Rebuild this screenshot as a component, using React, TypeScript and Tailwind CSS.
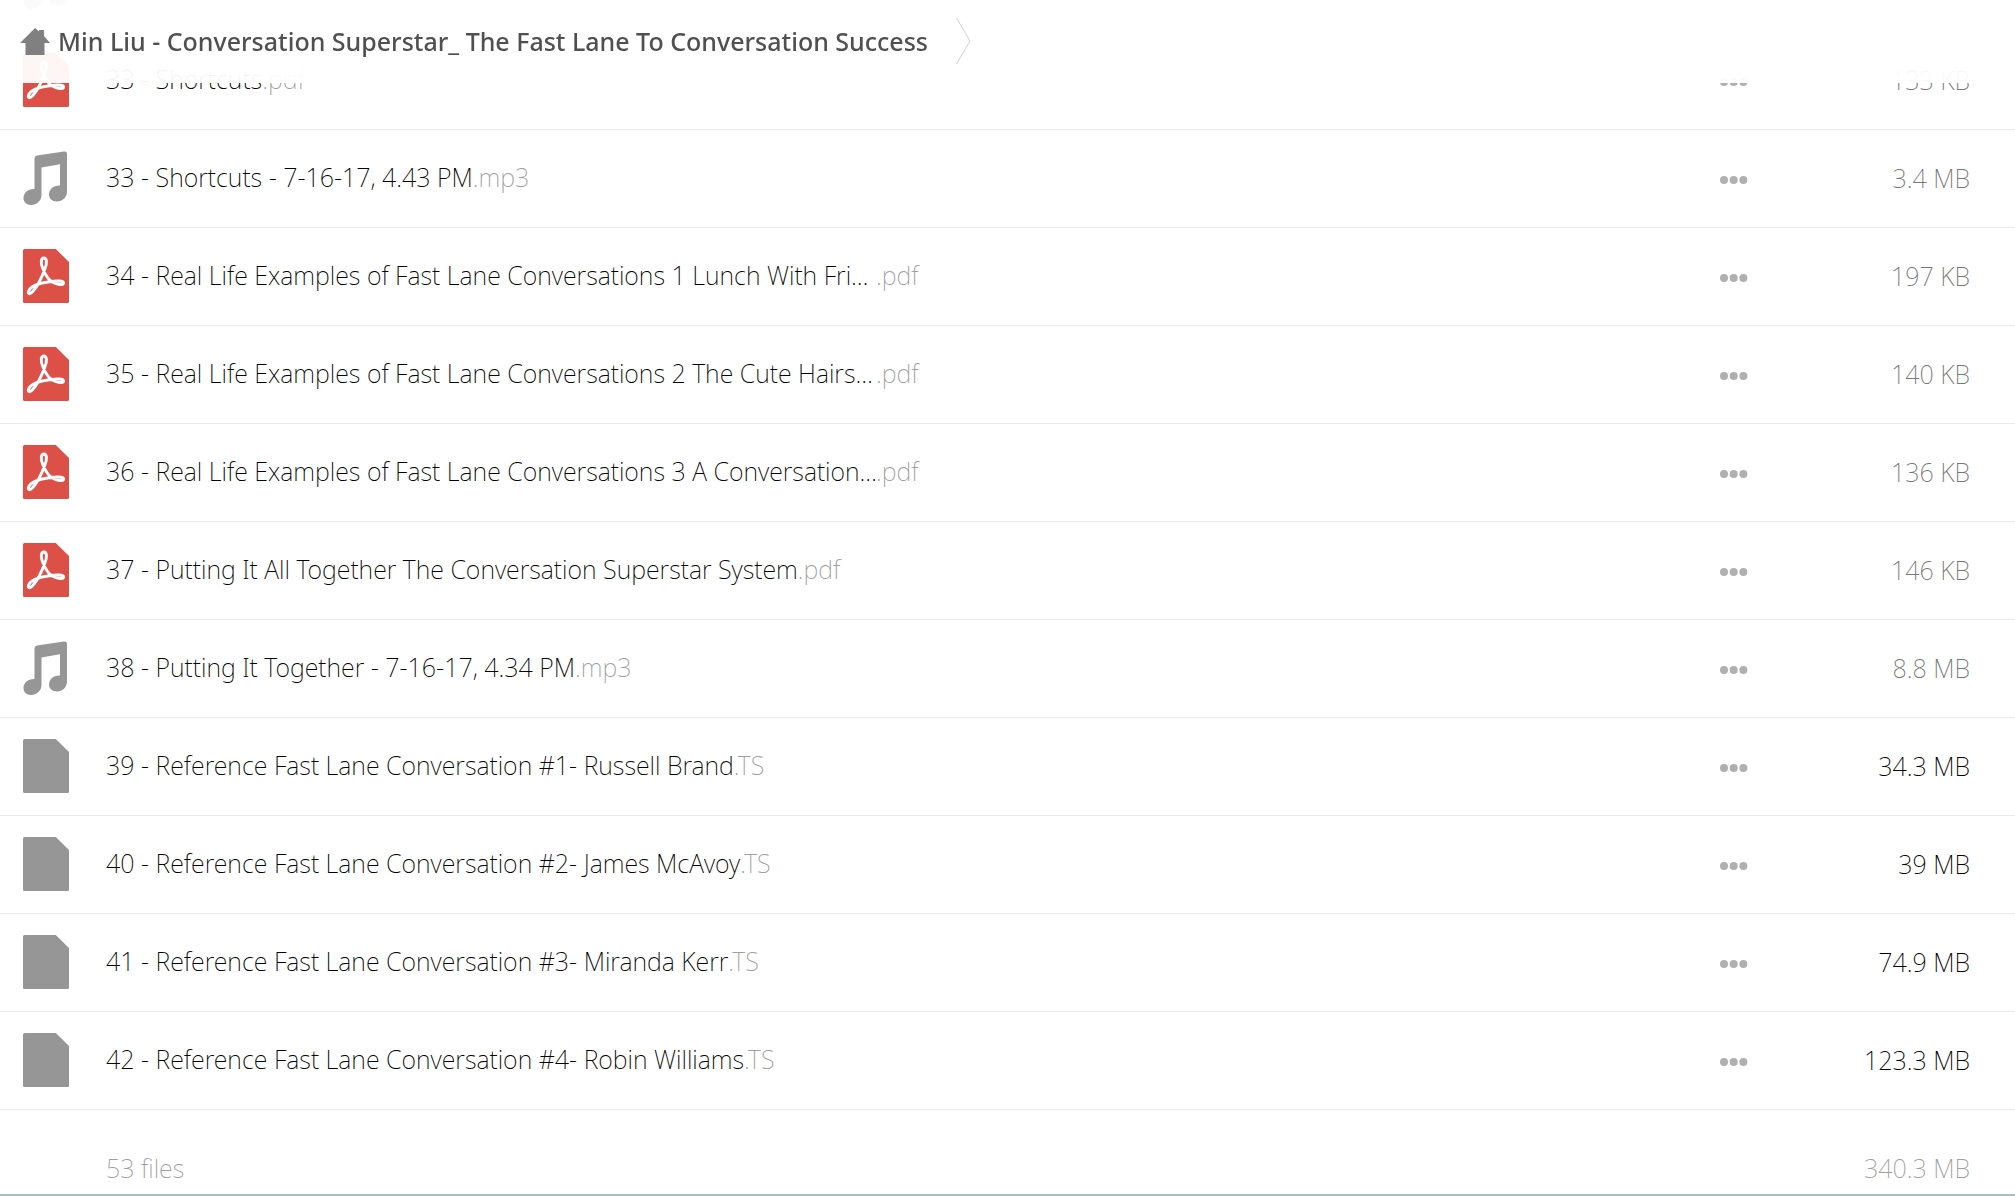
type FileKind = 'pdf' | 'audio' | 'file'

type FileRow = {
  name: string
  ext: string
  size: string
  kind: FileKind
  cut?: boolean
  large?: boolean
}

const FILES: FileRow[] = [
  { name: '', ext: '', size: '', kind: 'audio' },
  { name: '33 - Shortcuts', ext: '.pdf', size: '133 KB', kind: 'pdf' },
  { name: '33 - Shortcuts - 7-16-17, 4.43 PM', ext: '.mp3', size: '3.4 MB', kind: 'audio' },
  { name: '34 - Real Life Examples of Fast Lane Conversations 1 Lunch With Fri…', ext: '.pdf', size: '197 KB', kind: 'pdf', cut: true },
  { name: '35 - Real Life Examples of Fast Lane Conversations 2 The Cute Hairs…', ext: '.pdf', size: '140 KB', kind: 'pdf', cut: true },
  { name: '36 - Real Life Examples of Fast Lane Conversations 3 A Conversation…', ext: '.pdf', size: '136 KB', kind: 'pdf', cut: true },
  { name: '37 - Putting It All Together The Conversation Superstar System', ext: '.pdf', size: '146 KB', kind: 'pdf' },
  { name: '38 - Putting It Together - 7-16-17, 4.34 PM', ext: '.mp3', size: '8.8 MB', kind: 'audio' },
  { name: '39 - Reference Fast Lane Conversation #1- Russell Brand', ext: '.TS', size: '34.3 MB', kind: 'file', large: true },
  { name: '40 - Reference Fast Lane Conversation #2- James McAvoy', ext: '.TS', size: '39 MB', kind: 'file', large: true },
  { name: '41 - Reference Fast Lane Conversation #3- Miranda Kerr', ext: '.TS', size: '74.9 MB', kind: 'file', large: true },
  { name: '42 - Reference Fast Lane Conversation #4- Robin Williams', ext: '.TS', size: '123.3 MB', kind: 'file', large: true },
]

function FileIcon({ kind }: { kind: FileKind }) {
  if (kind === 'audio') {
    return (
      <svg viewBox="0 0 46 54" className="h-[54px] w-[46px] fill-[#969696]" aria-hidden="true">
        <path d="M11.500 7.500Q11.500 5 14 4.500L41 .6Q44 .2 44 3.200V41C44 46 39.500 50.500 34 50.500C29 50.500 26 47.500 26 43.500C26 38 31 34 37 34.500V13.200L18.500 16.500V44C18.500 49.500 14 54 8 54C3.500 54 .5 51 .5 47C.5 41.500 5.500 37.500 11.500 38Z" />
      </svg>
    )
  }

  return (
    <svg viewBox="0 0 47 54" preserveAspectRatio="none" className="h-[54px] w-[46px]" aria-hidden="true">
      <path
        d="M1.500 0H33.500L47 13V52.500Q47 54 45.500 54H1.500Q0 54 0 52.500V1.500Q0 0 1.500 0Z"
        className={kind === 'pdf' ? 'fill-[#dc5047]' : 'fill-[#969696]'}
      />
      {kind === 'pdf' && (
        <path
          d="M20.500 20C17.500 14 18.500 9 21.300 9C24.200 9 25 14 22.300 20C19 29 14 38.500 9.500 43C6.500 46 4.500 44.500 6 41.500C8.500 37 18 34 27 32.800C34 31.500 41.500 31.500 41.500 34C41.500 36.500 35 36 29 32.500C25 29.500 22.500 25 20.500 20Z"
          className="fill-none stroke-white stroke-[3]"
        />
      )}
    </svg>
  )
}

function MoreButton({ name }: { name: string }) {
  return (
    <button type="button" aria-label={`Options for ${name}`} className="block pt-1">
      <svg viewBox="0 0 28 8" className="h-2 w-7 fill-[#b0b0b0]" aria-hidden="true">
        <circle cx="4" cy="4" r="4" />
        <circle cx="13.700" cy="4" r="4" />
        <circle cx="23.400" cy="4" r="4" />
      </svg>
    </button>
  )
}

function Breadcrumb() {
  return (
    <header className="fixed inset-x-0 top-0 z-10 h-[83px] bg-white/95">
      <nav aria-label="Breadcrumb" className="flex h-[82px] items-center pl-5">
        <a href="#home" className="flex items-center gap-2 text-[25px] leading-9 font-medium text-[#505050]">
          <svg viewBox="0 0 30 27" className="h-[27px] w-[30px] fill-[#808080]" aria-hidden="true">
            <path d="M15 0L19 3.500V2H24V8L30 15H24.500V27H5.500V15H0Z" />
          </svg>
          Min Liu - Conversation Superstar_ The Fast Lane To Conversation Success
        </a>
        <svg viewBox="0 0 15 46" className="ml-7 h-[46px] w-[15px] fill-none stroke-[#d0d0d0]" aria-hidden="true">
          <path d="M.5 0L14 23L.5 46" />
        </svg>
      </nav>
    </header>
  )
}

export default function App() {
  return (
    <div className="flex h-screen flex-col justify-end overflow-hidden border-b-2 border-[#a9c1be] bg-white font-['Noto_Sans','Open_Sans',sans-serif] text-[25px] leading-9 font-extralight text-black">
      <Breadcrumb />
      <table className="w-full border-collapse">
        <tbody>
          {FILES.map((file) => (
            <tr key={file.name} className="h-[98px] border-b border-[#ebebeb]">
              <td className="w-[106px] py-0 pl-[23px]">
                <FileIcon kind={file.kind} />
              </td>
              <td className="px-0 pt-0 pb-0.5">
                <div className="flex whitespace-nowrap">
                  <span className={file.cut ? 'w-[770px]' : ''}>{file.name}</span>
                  <span className="text-[#a0a0a0]">{file.ext}</span>
                </div>
              </td>
              <td className="w-[80px] p-0">
                <MoreButton name={file.name} />
              </td>
              <td className={file.large ? 'w-[215px] py-0 pr-[45px] text-right' : 'w-[215px] py-0 pr-[45px] text-right text-[#777]'}>
                {file.size}
              </td>
            </tr>
          ))}
        </tbody>
        <tfoot>
          <tr className="h-[85px] text-[#a0a0a0]">
            <td />
            <td className="px-0 pt-8 pb-0" colSpan={2}>53 files</td>
            <td className="pt-8 pr-[45px] pb-0 text-right">340.3 MB</td>
          </tr>
        </tfoot>
      </table>
    </div>
  )
}
